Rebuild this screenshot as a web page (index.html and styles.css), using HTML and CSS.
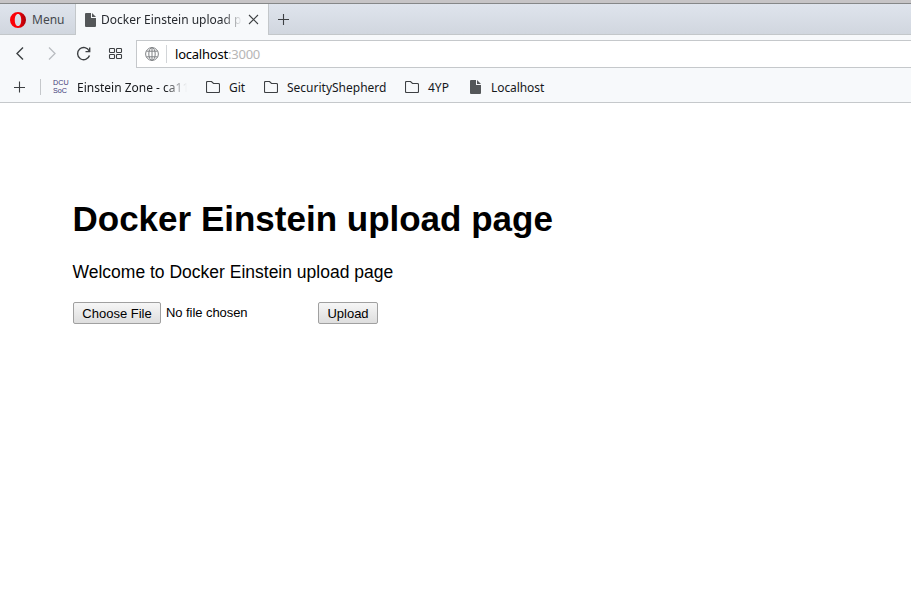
FILE: index.html
```html
<!DOCTYPE html>
<html lang="en">
<head>
<meta charset="utf-8">
<title>Docker Einstein upload page</title>
<link rel="stylesheet" href="styles.css">
</head>
<body>
<div class="frame-edge"></div>
<div class="tabbar">
  <div class="menu">
    <svg class="opera" width="16" height="16" viewBox="0 0 16 16"><defs><linearGradient id="red" x1="0" x2="1" y1="0" y2="0"><stop offset="0.5" stop-color="#fb0007"/><stop offset="1" stop-color="#a70008"/></linearGradient></defs><path fill="url(#red)" fill-rule="evenodd" d="M8 0a8 8 0 1 0 0 16A8 8 0 0 0 8 0zM8 1.900c2 0 3.200 2.500 3.200 6.100s-1.200 6.100-3.200 6.100S4.800 11.600 4.800 8 6 1.900 8 1.900z"/></svg>
    <span>Menu</span>
  </div>
  <div class="tab">
    <svg width="11" height="14" viewBox="0 0 11 14"><path class="solid" d="M1 0h5v5h5v8q0 1-1 1H1q-1 0-1-1V1q0-1 1-1zM7 0l4 4H7z"/></svg>
    <span class="tab-title">Docker Einstein upload pa</span>
    <svg class="close" width="11" height="11" viewBox="0 0 11 11"><path class="line" d="M1 1l9 9M10 1l-9 9"/></svg>
  </div>
  <div class="newtab"><svg width="11" height="11" viewBox="0 0 11 11"><path class="line" d="M5.500 0v11M0 5.500h11"/></svg></div>
</div>
<div class="toolbar">
  <div class="nav">
    <svg width="16" height="16" viewBox="0 0 16 16"><path class="line bold" d="M11 1.500L5 7.500l6 6"/></svg>
    <svg width="16" height="16" viewBox="0 0 16 16"><path class="line pale" d="M5 1.500l6 6-6 6"/></svg>
    <svg width="16" height="16" viewBox="0 0 16 16"><path class="line bold" d="M13.200 5A6.100 6.100 0 1 0 13.500 9.500M13.700 1.500v4.100H9.500"/></svg>
    <svg width="16" height="16" viewBox="0 0 16 16"><g class="line"><rect x="1.500" y="2.500" width="5" height="4" rx=".8"/><rect x="8.500" y="2.500" width="5" height="4" rx=".8"/><rect x="1.500" y="8.500" width="5" height="4" rx=".8"/><rect x="8.500" y="8.500" width="5" height="4" rx=".8"/></g></svg>
  </div>
  <div class="address">
    <svg width="14" height="14" viewBox="0 0 14 14"><g class="line grey"><circle cx="7" cy="7" r="6.400"/><ellipse cx="7" cy="7" rx="3.200" ry="6.400"/><path d="M7 .6v12.800M1.300 4.200h11.400M1.300 9.800h11.400"/></g></svg>
    <span class="divider"></span>
    <span class="url">localhost<span class="port">:3000</span></span>
  </div>
</div>
<div class="bookmarks">
  <svg class="add" width="12" height="12" viewBox="0 0 12 12"><path class="line" d="M6.500 .5v11M1 6.500h11"/></svg>
  <span class="separator"></span>
  <span class="dcu"><span>DCU</span><span>SoC</span></span>
  <span class="mark zone">Einstein Zone - ca11</span>
  <svg class="folder" width="14" height="12" viewBox="0 0 14 12"><path class="line" d="M1.500 .5h4l2 2h5q1 0 1 1v7q0 1-1 1h-11q-1 0-1-1v-9q0-1 1-1z"/></svg>
  <span class="mark git">Git</span>
  <svg class="folder" width="14" height="12" viewBox="0 0 14 12"><path class="line" d="M1.500 .5h4l2 2h5q1 0 1 1v7q0 1-1 1h-11q-1 0-1-1v-9q0-1 1-1z"/></svg>
  <span class="mark shepherd">SecurityShepherd</span>
  <svg class="folder" width="14" height="12" viewBox="0 0 14 12"><path class="line" d="M1.500 .5h4l2 2h5q1 0 1 1v7q0 1-1 1h-11q-1 0-1-1v-9q0-1 1-1z"/></svg>
  <span class="mark fyp">4YP</span>
  <svg class="page-icon" width="11" height="14" viewBox="0 0 11 14"><path class="solid" d="M1 0h5v5h5v8q0 1-1 1H1q-1 0-1-1V1q0-1 1-1zM7 0l4 4H7z"/></svg>
  <span class="mark local">Localhost</span>
</div>
<main>
  <h1>Docker Einstein upload page</h1>
  <p>Welcome to Docker Einstein upload page</p>
  <form>
    <button class="choose" type="button">Choose File</button>
    <span class="filename">No file chosen</span>
    <button class="upload" type="button">Upload</button>
  </form>
</main>
</body>
</html>
```
FILE: styles.css
```css
* { box-sizing: border-box; }
body { margin: 0; height: 592px; overflow: hidden; background: #fff; color: #000; font: 12px/18px "Noto Sans", sans-serif; }
svg { display: block; flex: none; }
.line { fill: none; stroke: #3d4043; stroke-width: 1.1; }
.bold { stroke-width: 1.4; }
.pale { stroke: #b9bcc0; stroke-width: 1.3; }
.grey, .grey * { stroke: #808386; stroke-width: 1; }
.solid { fill: #545759; }
.frame-edge { height: 4px; background: #c6c4c6; border-bottom: 1px solid #858788; }
.tabbar { display: flex; height: 31px; background: linear-gradient(#dfe4ed, #d0d6de); }
.menu { display: flex; align-items: center; width: 76px; padding: 1px 0 0 10px; gap: 6px; color: #45484d; border-right: 1px solid #c3c7ca; border-bottom: 1px solid #c3c7ca; }
.tab { display: flex; align-items: center; width: 192px; padding-left: 9px; background: #f7f9fb; color: #282b30; }
.tab-title { width: 143px; margin-left: 5px; white-space: nowrap; -webkit-mask-image: linear-gradient(to right, #000 122px, transparent 141px); mask-image: linear-gradient(to right, #000 122px, transparent 141px); }
.close { margin-left: 4px; }
.newtab { display: flex; flex: 1; align-items: center; padding-left: 9px; border-left: 1px solid #c3c7ca; border-bottom: 1px solid #c3c7ca; }
.toolbar { display: flex; height: 38px; padding-top: 5px; background: #f7f9fb; }
.nav { display: flex; align-items: center; width: 136px; height: 28px; padding-left: 12px; gap: 16px; }
.address { display: flex; flex: 1; align-items: center; height: 28px; padding-left: 8px; background: #fff; border: solid #c5c8cb; border-width: 1px 0 1px 1px; }
.divider { width: 1px; height: 18px; margin: 0 8px 0 7px; background: #d2d5d8; }
.url { font-size: 13px; letter-spacing: -0.22px; }
.port { color: #b6b6b6; }
.bookmarks { display: flex; align-items: center; height: 30px; padding-bottom: 1px; background: #f7f9fb; border-bottom: 1px solid #c5c8cb; color: #16181b; }
.add { margin-left: 13px; }
.separator { width: 1px; height: 16px; margin: 0 12px 0 15px; background: #c5c8cb; }
.dcu { display: grid; width: 17px; margin-right: 7px; color: #403a78; font: 7.2px/8px "Liberation Sans", sans-serif; }
.mark { padding-top: 2px; white-space: nowrap; }
.zone { width: 112px; margin-right: 17px; -webkit-mask-image: linear-gradient(to right, #000 88px, transparent 110px); mask-image: linear-gradient(to right, #000 88px, transparent 110px); }
.folder { margin-right: 9px; }
.git { width: 35px; }
.shepherd { width: 118px; }
.fyp { width: 42px; }
.page-icon { margin-right: 10px; }
.local { letter-spacing: -0.08px; }
main { padding: 96px 72.5px 0; font-family: "Liberation Sans", sans-serif; }
h1 { margin: 0; font-size: 35px; line-height: 40px; }
p { margin: 23px 0 0; font-size: 17.5px; line-height: 20px; }
form { display: flex; margin: 20px 0 0 .5px; }
button { height: 22px; padding: 1px 0 0; background: linear-gradient(#f6f6f6, #dedede); border: 1px solid #a0a0a0; border-radius: 2px; color: #000; font: 13px/18px "Liberation Sans", sans-serif; }
.choose { width: 88px; }
.filename { width: 152px; margin-left: 5px; font-size: 13px; line-height: 22px; letter-spacing: -0.06px; }
.upload { width: 60px; }
```
